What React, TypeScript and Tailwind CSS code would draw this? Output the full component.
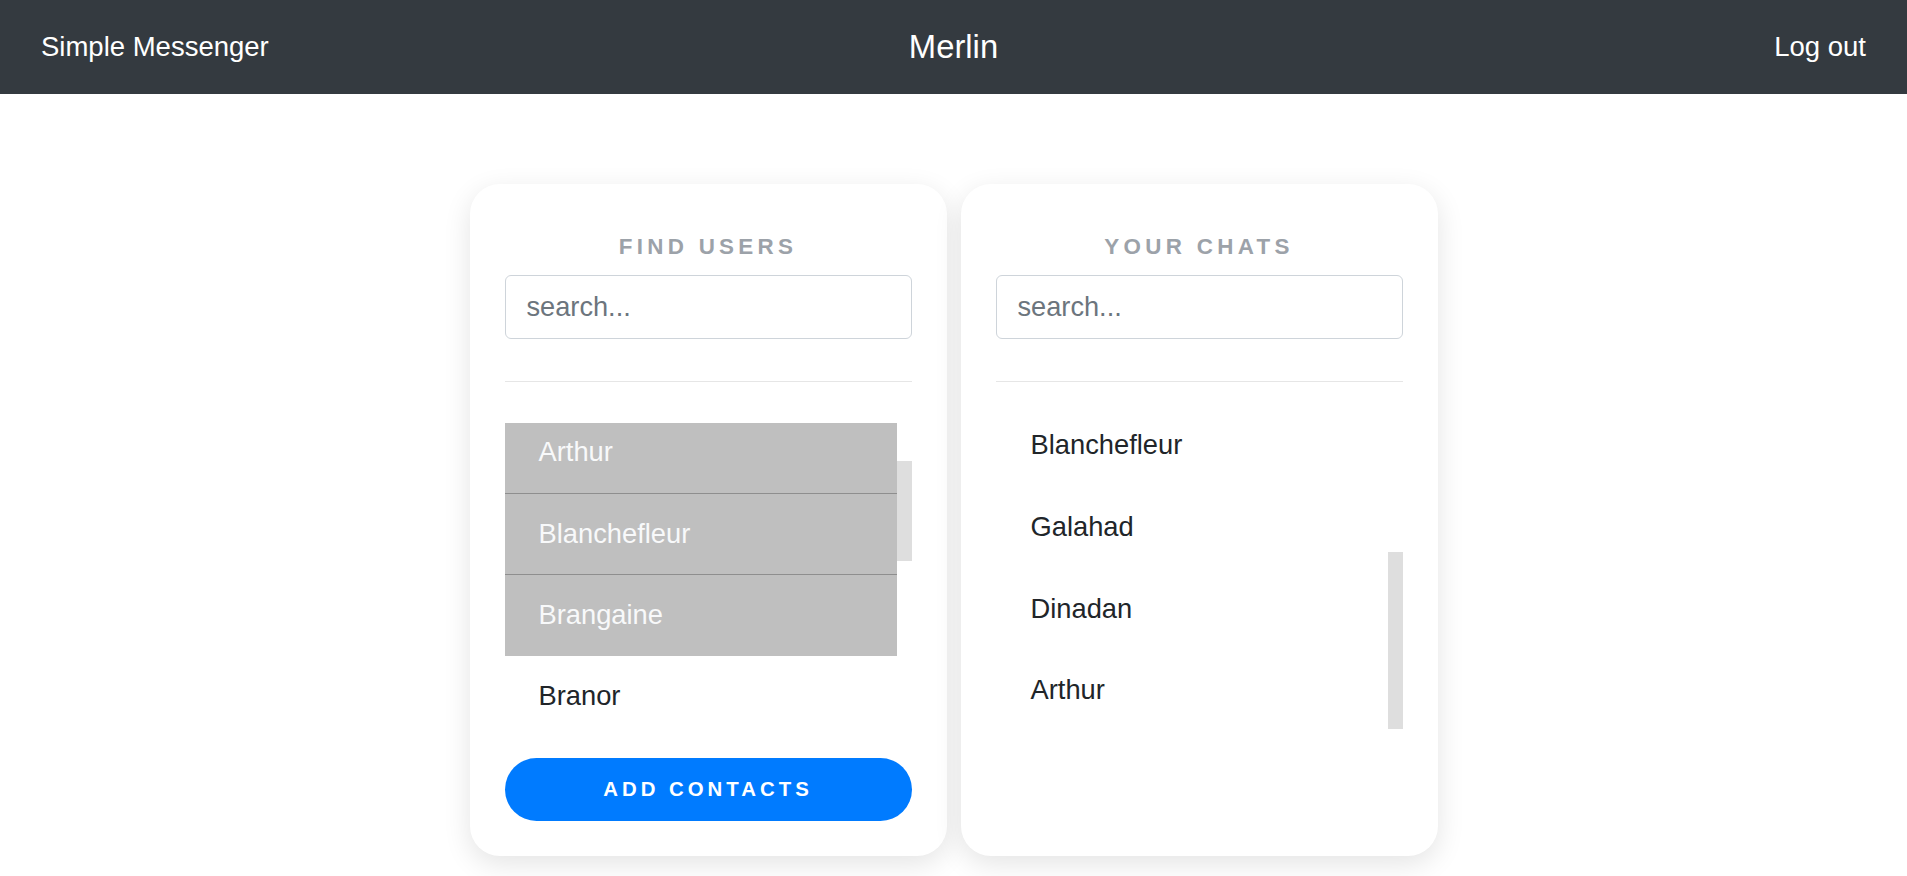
import React from "react"

const users = [
  { name: "Arthur", selected: true },
  { name: "Blanchefleur", selected: true },
  { name: "Brangaine", selected: true },
  { name: "Branor", selected: false },
]

const chats = ["Blanchefleur", "Galahad", "Dinadan", "Arthur"]

function CardHeader({ title }: { title: string }) {
  return (
    <>
      <h2 className="text-center text-[22.4px] leading-[25px] font-bold tracking-[4.3px] text-[#9ca2a9] uppercase">
        {title}
      </h2>
      <input
        type="text"
        placeholder="search..."
        className="mt-[16px] h-[64px] w-full rounded-[6px] border border-[#ced4da] bg-white px-[21px] text-[27.2px] text-[#495057] outline-none placeholder:text-[#6c757d]"
      />
      <hr className="mt-[42px] border-0 border-t border-[#e6e6e6]" />
    </>
  )
}

export default function App() {
  return (
    <div className="min-h-screen bg-white font-['Liberation_Sans',Arial,sans-serif]">
      <header className="grid h-[94px] grid-cols-3 items-center bg-[#343a40] px-[41px] text-white">
        <span className="justify-self-start text-[27.5px]">Simple Messenger</span>
        <span className="justify-self-center text-[32.8px]">Merlin</span>
        <button className="justify-self-end text-[27.5px]">Log out</button>
      </header>

      <main className="flex justify-center gap-[14px] pt-[90px]">
        {/* find users */}
        <section className="flex w-[477px] flex-col rounded-[30px] bg-white px-[35px] pt-[50px] pb-[35px] shadow-[0_8px_28px_rgba(0,0,0,0.11)]">
          <CardHeader title="Find users" />
          <div className="mt-[41px] flex h-[314.6px] overflow-hidden">
            <ul className="-mt-[11.8px] flex-1">
              {users.map((u) => (
                <li
                  key={u.name}
                  className={`flex h-[81.6px] items-center pl-[34px] text-[27.3px] ${
                    u.selected
                      ? "border-t border-[#8e8e8e] bg-[#bfbfbf] text-[#f8f9fa]"
                      : "text-[#212529]"
                  }`}
                >
                  {u.name}
                </li>
              ))}
            </ul>
            <div className="w-[15px] shrink-0">
              <div className="mt-[38px] h-[100px] bg-[#dedede]" />
            </div>
          </div>
          <button className="mt-[20.4px] h-[63px] w-full rounded-full bg-[#007bff] text-[20.4px] font-bold tracking-[4px] text-white uppercase">
            Add contacts
          </button>
        </section>

        {/* your chats */}
        <section className="flex w-[477px] flex-col rounded-[30px] bg-white px-[35px] pt-[50px] pb-[35px] shadow-[0_8px_28px_rgba(0,0,0,0.11)]">
          <CardHeader title="Your chats" />
          <div className="mt-[23px] flex h-[326.4px]">
            <ul className="flex-1">
              {chats.map((c) => (
                <li key={c} className="flex h-[81.6px] items-center pl-[35px] text-[27.3px] text-[#212529]">
                  {c}
                </li>
              ))}
            </ul>
            <div className="w-[15px] shrink-0">
              <div className="mt-[147px] h-[177px] bg-[#dedede]" />
            </div>
          </div>
        </section>
      </main>
    </div>
  )
}
